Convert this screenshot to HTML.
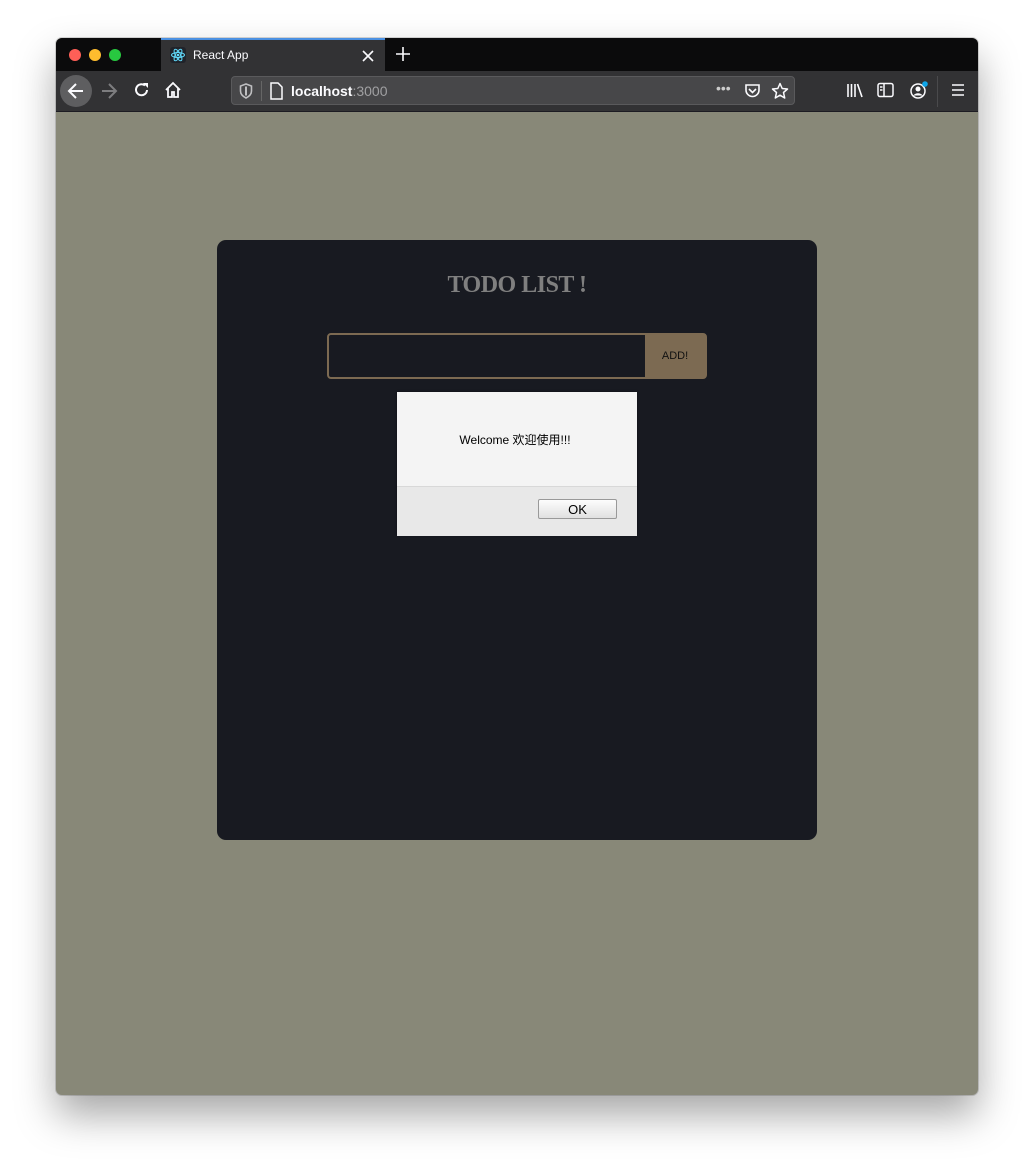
<!DOCTYPE html>
<html><head><meta charset="utf-8"><style>
html,body{margin:0;padding:0;background:#fff;width:1034px;height:1169px;overflow:hidden;font-family:"Liberation Sans","Noto Sans CJK SC",sans-serif}
.win{position:absolute;left:56px;top:38px;width:922px;height:1057px;border-radius:6px;overflow:hidden;background:#888878;box-shadow:0 20px 40px rgba(0,0,0,0.35),0 0 0 1px rgba(0,0,0,0.15)}
.tabs{position:absolute;left:0;top:0;width:922px;height:33px;background:#0b0b0c}
.dot{position:absolute;top:11px;width:12px;height:12px;border-radius:50%}
.tab{position:absolute;left:105px;top:0;width:224px;height:33px;background:#323234;border-top:2px solid #4a90e2;box-sizing:border-box}
.tab .t{position:absolute;left:32px;top:8px;color:#fbfbfe;font-size:12px}
.tool{position:absolute;left:0;top:33px;width:922px;height:40px;background:#323234;border-bottom:1px solid #1c1b22}
.url{position:absolute;left:175px;top:5px;width:564px;height:29px;background:#474749;border-radius:4px;border:1px solid #5a5a5c;box-sizing:border-box}
.url .t{position:absolute;left:59px;top:6px;font-size:14px;color:#fbfbfe}
.card{position:absolute;left:161px;top:202px;width:600px;height:600px;background:#181a21;border-radius:9px}
h1{position:absolute;left:0;width:600px;top:32px;margin:0;text-align:center;font-family:"Liberation Serif",serif;font-weight:bold;font-size:24px;letter-spacing:-0.5px;color:#7f7f7f}
.inp{position:absolute;left:110px;top:93px;width:380px;height:46px;border:2px solid #7c6a52;border-radius:4px;box-sizing:border-box;background:#181a21}
.btn{position:absolute;right:0;top:0;width:60px;height:42px;background:#7c6a52;color:#111;font-size:11px;line-height:42px;text-align:center}
.dlg{position:absolute;left:180px;top:152px;width:240px;height:143px;background:#f4f4f4;box-shadow:0 0 2px rgba(0,0,0,.5)}
.dlg .msg{position:absolute;top:39px;left:-2px;width:240px;text-align:center;font-size:12px;color:#000}
.dlg .ft{position:absolute;left:0;top:94px;width:240px;height:49px;background:#e8e8e8;border-top:1px solid #d8d8d8}
.ok{position:absolute;left:141px;top:12px;width:79px;height:20px;border:1px solid #999;border-radius:2px;background:linear-gradient(#fdfdfd,#e0e0e0);font-size:13px;text-align:center;line-height:19px;box-sizing:border-box}
svg{position:absolute}
</style></head><body>
<div class="win">
 <div class="tabs">
  <div class="dot" style="left:13px;background:#fe5f57"></div>
  <div class="dot" style="left:33px;background:#febc2e"></div>
  <div class="dot" style="left:53px;background:#28c840"></div>
  <div class="tab">
   <svg style="left:9px;top:7px" width="16" height="16" viewBox="0 0 16 16"><rect width="16" height="16" rx="3" fill="#20232a"/><g fill="none" stroke="#61dafb" stroke-width="1"><ellipse cx="8" cy="8" rx="6.5" ry="2.5"/><ellipse cx="8" cy="8" rx="6.5" ry="2.5" transform="rotate(60 8 8)"/><ellipse cx="8" cy="8" rx="6.5" ry="2.5" transform="rotate(120 8 8)"/></g><circle cx="8" cy="8" r="1.3" fill="#61dafb"/></svg>
   <div class="t">React App</div>
   <svg style="left:201px;top:10px" width="12" height="12" viewBox="0 0 12 12"><path d="M1 1L11 11M11 1L1 11" stroke="#fbfbfe" stroke-width="1.6"/></svg>
  </div>
  <svg style="left:340px;top:9px" width="14" height="14" viewBox="0 0 14 14"><path d="M7 0V14M0 7H14" stroke="#fbfbfe" stroke-width="1.6"/></svg>
 </div>
 <div class="tool">
  <div style="position:absolute;left:4px;top:4px;width:32px;height:32px;border-radius:50%;background:#5e5e60"></div>
  <svg style="left:10px;top:10px" width="20" height="20" viewBox="0 0 20 20"><path d="M17 10H4M10 3L3 10L10 17" fill="none" stroke="#fbfbfe" stroke-width="2"/></svg>
  <svg style="left:43px;top:10px" width="20" height="20" viewBox="0 0 20 20"><path d="M3 10H16M10 3L17 10L10 17" fill="none" stroke="#7d7d7f" stroke-width="2"/></svg>
  <svg style="left:77px;top:10px" width="18" height="18" viewBox="0 0 18 18"><path d="M14 9A5.5 5.5 0 1 1 12 4.5" fill="none" stroke="#fbfbfe" stroke-width="2"/><path d="M10 2H15V7Z" fill="#fbfbfe"/></svg>
  <svg style="left:108px;top:10px" width="18" height="18" viewBox="0 0 18 18"><path d="M2 9L9 2L16 9M4 7V16H8V11H10V16H14V7" fill="none" stroke="#fbfbfe" stroke-width="1.8"/></svg>
  <div class="url">
   <svg style="left:7px;top:6px" width="14" height="16" viewBox="0 0 14 16"><path d="M7 1L1.5 3V8C1.5 11 4 13.5 7 15C10 13.5 12.5 11 12.5 8V3Z" fill="none" stroke="#bfbfc1" stroke-width="1.6"/><path d="M7 3.5V12.5" stroke="#bfbfc1" stroke-width="2"/></svg>
   <div style="position:absolute;left:29px;top:4px;width:1px;height:20px;background:#666"></div>
   <svg style="left:37px;top:5px" width="14" height="18" viewBox="0 0 14 18"><path d="M2 1H9L13 5V17H2Z" fill="none" stroke="#fbfbfe" stroke-width="1.5"/></svg>
   <div class="t"><b>localhost</b><span style="color:#a0a0a2">:3000</span></div>
   <div style="position:absolute;left:484px;top:3px;color:#ccc;font-size:14px;letter-spacing:0">•••</div>
   <svg style="left:512px;top:6px" width="17" height="16" viewBox="0 0 17 16"><path d="M2 2H15V7A6.5 6.5 0 0 1 2 7Z" fill="none" stroke="#fbfbfe" stroke-width="1.6"/><path d="M5 6L8.5 9.5L12 6" fill="none" stroke="#fbfbfe" stroke-width="1.6"/></svg>
   <svg style="left:539px;top:5px" width="18" height="18" viewBox="0 0 18 18"><path d="M9 1.5L11.2 6.5L16.5 7L12.5 10.5L13.7 16L9 13.2L4.3 16L5.5 10.5L1.5 7L6.8 6.5Z" fill="none" stroke="#fbfbfe" stroke-width="1.5" stroke-linejoin="round"/></svg>
  </div>
  <svg style="left:790px;top:11px" width="18" height="17" viewBox="0 0 18 17"><path d="M2 2V15M5.5 2V15M9 2V15M11.5 2L16 15" stroke="#fbfbfe" stroke-width="1.6"/></svg>
  <svg style="left:821px;top:11px" width="17" height="16" viewBox="0 0 17 16"><rect x="1" y="1.5" width="15" height="13" rx="2" fill="none" stroke="#fbfbfe" stroke-width="1.5"/><path d="M7 2V14M3 5H5.5M3 8H5.5" stroke="#fbfbfe" stroke-width="1.5"/></svg>
  <svg style="left:853px;top:9px" width="20" height="20" viewBox="0 0 20 20"><circle cx="9" cy="11" r="7" fill="none" stroke="#fbfbfe" stroke-width="1.5"/><circle cx="9" cy="9" r="2.5" fill="#fbfbfe"/><path d="M4.5 15.5C6 12.5 12 12.5 13.5 15.5" fill="#fbfbfe"/><circle cx="16" cy="4" r="2.8" fill="#0ea5e9"/></svg>
  <div style="position:absolute;left:881px;top:5px;width:1px;height:31px;background:#4a4a4c"></div>
  <svg style="left:895px;top:12px" width="14" height="14" viewBox="0 0 14 14"><path d="M1 2H13M1 7H13M1 12H13" stroke="#fbfbfe" stroke-width="1.6"/></svg>
 </div>
 <div class="card">
  <h1>TODO LIST !</h1>
  <div class="inp"><div class="btn">ADD!</div></div>
  <div class="dlg">
   <div class="msg">Welcome 欢迎使用!!!</div>
   <div class="ft"><div class="ok">OK</div></div>
  </div>
 </div>
</div>
</body></html>
